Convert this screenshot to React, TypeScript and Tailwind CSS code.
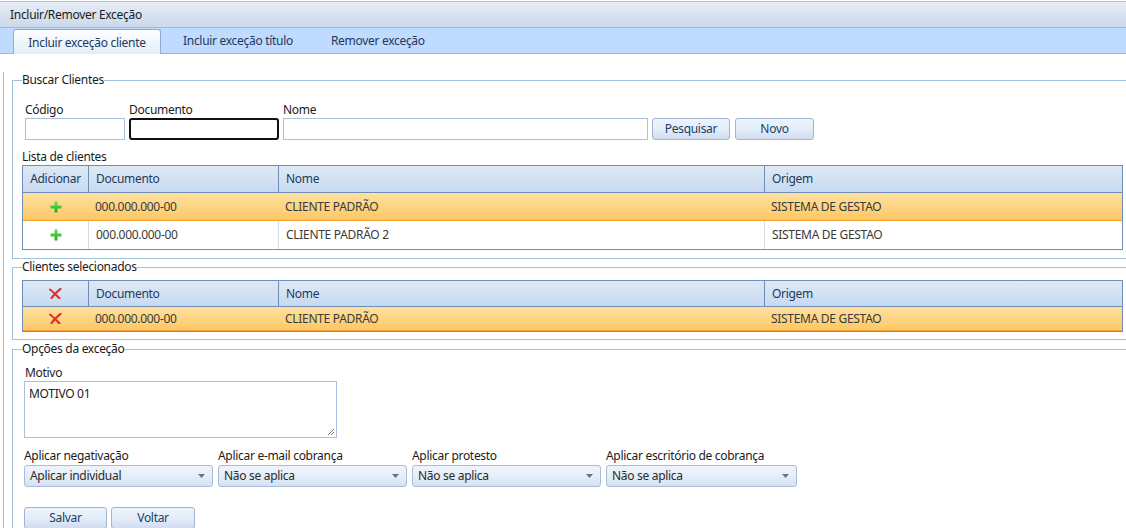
import React from "react";

const PlusIcon = () => (
  <svg width="12" height="12" viewBox="0 0 12 12">
    <defs>
      <linearGradient id="pg" x1="0" y1="0" x2="0" y2="1">
        <stop offset="0" stopColor="#5fe05f" />
        <stop offset="1" stopColor="#1fae1f" />
      </linearGradient>
    </defs>
    <path d="M4.5 0.5h3v4h4v3h-4v4h-3v-4h-4v-3h4z" fill="url(#pg)" />
  </svg>
);

const XIcon = () => (
  <svg width="13" height="11" viewBox="0 0 13 11">
    <path d="M1 1.5 C4 3.5 7 7 10.5 10.5" stroke="#e0302a" strokeWidth="2.1" fill="none" strokeLinecap="round" />
    <path d="M11.5 0.8 C8 3.5 5 6.5 2.5 10.2" stroke="#e0302a" strokeWidth="2.1" fill="none" strokeLinecap="round" />
  </svg>
);

const Btn = ({ label, w }: { label: string; w: string }) => (
  <div
    className={`${w} h-[22px] flex items-center justify-center rounded-[3px] border border-[#9fb5d3] bg-linear-to-b from-[#eef4fc] via-[#e4edf9] to-[#d0ddef] text-[12px] text-[#203e6b]`}
  >
    {label}
  </div>
);

const Combo = ({ label, value, w }: { label: string; value: string; w: string }) => (
  <div className={`${w} flex flex-col`}>
    <div className="h-[16px] leading-[16px] text-[12px] text-[#1b1b1b]">{label}</div>
    <div className="mt-[1px] h-[22px] flex items-center justify-between rounded-[3px] border border-[#a7bcd9] bg-linear-to-b from-[#eef4fc] via-[#e6eef9] to-[#d5e2f3] pl-[5px] pr-[7px] text-[12px] text-[#2a2a2a]">
      <span>{value}</span>
      <svg width="7" height="4" viewBox="0 0 7 4">
        <path d="M0 0h7L3.5 4z" fill="#6b7280" />
      </svg>
    </div>
  </div>
);

const cols = "grid grid-cols-[65px_190px_486px_1fr]";

const Header = ({ first, h }: { first: React.ReactNode; h: string }) => (
  <div className={`${cols} ${h} border-b border-[#6f8db5] bg-linear-to-b from-[#dfe9f5] to-[#c6daf2] text-[12px] text-[#1e395b]`}>
    <div className="flex items-center justify-center">{first}</div>
    <div className="flex items-center pl-[7px] border-l border-[#6f8db5]">Documento</div>
    <div className="flex items-center pl-[7px] border-l border-[#6f8db5]">Nome</div>
    <div className="flex items-center pl-[7px] border-l border-[#6f8db5]">Origem</div>
  </div>
);

const Row = ({
  icon,
  nome,
  selected,
  h,
}: {
  icon: React.ReactNode;
  nome: string;
  selected?: boolean;
  h: string;
}) => (
  <div
    className={`${cols} ${h} text-[12px] text-[#3a3a3a] ${
      selected
        ? "bg-linear-to-b from-[#fee0a0] to-[#fdc863] border-b border-[#f6a033]"
        : "bg-white"
    }`}
  >
    <div className="flex items-center justify-center">{icon}</div>
    <div className={`flex items-center pl-[7px] ${selected ? "" : "border-l border-[#d6dde8]"}`}>000.000.000-00</div>
    <div className={`flex items-center pl-[7px] ${selected ? "" : "border-l border-[#d6dde8]"}`}>{nome}</div>
    <div className={`flex items-center pl-[7px] ${selected ? "" : "border-l border-[#d6dde8]"}`}>SISTEMA DE GESTAO</div>
  </div>
);

const Legend = ({ text }: { text: string }) => (
  <legend className="ml-[9px] h-[16px] leading-[16px] text-[12px] text-[#1b1b1b]">{text}</legend>
);

export default function App() {
  return (
    <div className="w-[1126px] h-[528px] overflow-hidden bg-white font-['Noto_Sans',sans-serif] tracking-[-0.3px] text-[12px] text-[#1b1b1b]">
      <div className="mt-[1px] border-t border-[#b8bfc9] h-[27px] border-b border-b-[#a6b9d1] bg-linear-to-b from-[#e6edf7] to-[#cbd9ea] flex items-center pl-[10px] pt-[1px] text-[12px] text-[#1b1b1b]">
        Incluir/Remover Exceção
      </div>
      <div className="h-[26px] bg-[#bfdbff] border-b border-[#9eb6d5] flex items-end">
        <div className="ml-[13px] w-[148px] h-[25px] -mb-[1px] rounded-t-[3px] border border-b-0 border-[#93abd0] bg-linear-to-b from-[#fdfeff] to-[#e3edf9] flex items-center justify-center pt-[1px] text-[12px] text-[#1e395b]">
          Incluir exceção cliente
        </div>
        <div className="h-[25px] flex items-center ml-[22px] text-[12px] text-[#1e395b]">Incluir exceção título</div>
        <div className="h-[25px] flex items-center ml-[38px] text-[12px] text-[#1e395b]">Remover exceção</div>
      </div>
      <div className="ml-[3px] h-[500px] border-l border-[#a9bed8] pl-[8px]">
        {/* Buscar Clientes */}
        <fieldset className="mt-[18px] -mr-[20px] border border-[#a0c3df] min-w-0">
          <Legend text="Buscar Clientes" />
          <div className="pt-[14px] pl-[9px] pr-[20px] pb-[8px]">
            <div className="flex items-end ml-[3px]">
              <div className="flex flex-col w-[100px]">
                <div className="h-[15px] leading-[16px]">Código</div>
                <div className="mt-[1px] h-[22px] border border-[#abc1de] bg-white" />
              </div>
              <div className="flex flex-col w-[150px] ml-[4px]">
                <div className="h-[15px] leading-[16px]">Documento</div>
                <div className="mt-[1px] h-[22px] border-2 border-[#111] rounded-[3px] bg-white" />
              </div>
              <div className="flex flex-col w-[365px] ml-[4px]">
                <div className="h-[15px] leading-[16px]">Nome</div>
                <div className="mt-[1px] h-[22px] border border-[#abc1de] bg-white" />
              </div>
              <Btn label="Pesquisar" w="w-[78px] ml-[4px]" />
              <Btn label="Novo" w="w-[79px] ml-[5px]" />
            </div>
            <div className="mt-[9px] h-[16px] leading-[16px]">Lista de clientes</div>
            <div className="w-[1101px] border border-[#6f8db5]">
              <Header first="Adicionar" h="h-[27px]" />
              <Row icon={<PlusIcon />} nome="CLIENTE PADRÃO" selected h="h-[28px]" />
              <Row icon={<PlusIcon />} nome="CLIENTE PADRÃO 2" h="h-[28px]" />
            </div>
          </div>
        </fieldset>
        {/* Clientes selecionados */}
        <fieldset className="-mr-[20px] border border-[#a0c3df] min-w-0">
          <Legend text="Clientes selecionados" />
          <div className="pt-[5px] pl-[9px] pr-[20px] pb-[7px]">
            <div className="w-[1101px] border border-[#6f8db5]">
              <Header first={<XIcon />} h="h-[26px]" />
              <Row icon={<XIcon />} nome="CLIENTE PADRÃO" selected h="h-[24px]" />
            </div>
          </div>
        </fieldset>
        {/* Opções da exceção */}
        <fieldset className="mt-[1px] -mr-[20px] border border-[#a0c3df] min-w-0">
          <Legend text="Opções da exceção" />
          <div className="pt-[8px] pl-[11px] pb-[20px]">
            <div className="ml-[1px] h-[15px] leading-[16px]">Motivo</div>
            <div className="relative mt-[1px] w-[313px] h-[57px] border border-[#a9c0de] bg-white pl-[4px] pt-[3px] text-[12px] text-[#222]">
              MOTIVO 01
              <svg className="absolute right-[1px] bottom-[1px]" width="8" height="8" viewBox="0 0 8 8">
                <path d="M7 1L1 7M7 4L4 7" stroke="#777" strokeWidth="1" />
              </svg>
            </div>
            <div className="mt-[10px] flex gap-[5px]">
              <Combo label="Aplicar negativação" value="Aplicar individual" w="w-[189px]" />
              <Combo label="Aplicar e-mail cobrança" value="Não se aplica" w="w-[189px]" />
              <Combo label="Aplicar protesto" value="Não se aplica" w="w-[189px]" />
              <Combo label="Aplicar escritório de cobrança" value="Não se aplica" w="w-[191px]" />
            </div>
            <div className="mt-[20px] flex gap-[4px]">
              <Btn label="Salvar" w="w-[83px]" />
              <Btn label="Voltar" w="w-[84px]" />
            </div>
          </div>
        </fieldset>
      </div>
    </div>
  );
}
